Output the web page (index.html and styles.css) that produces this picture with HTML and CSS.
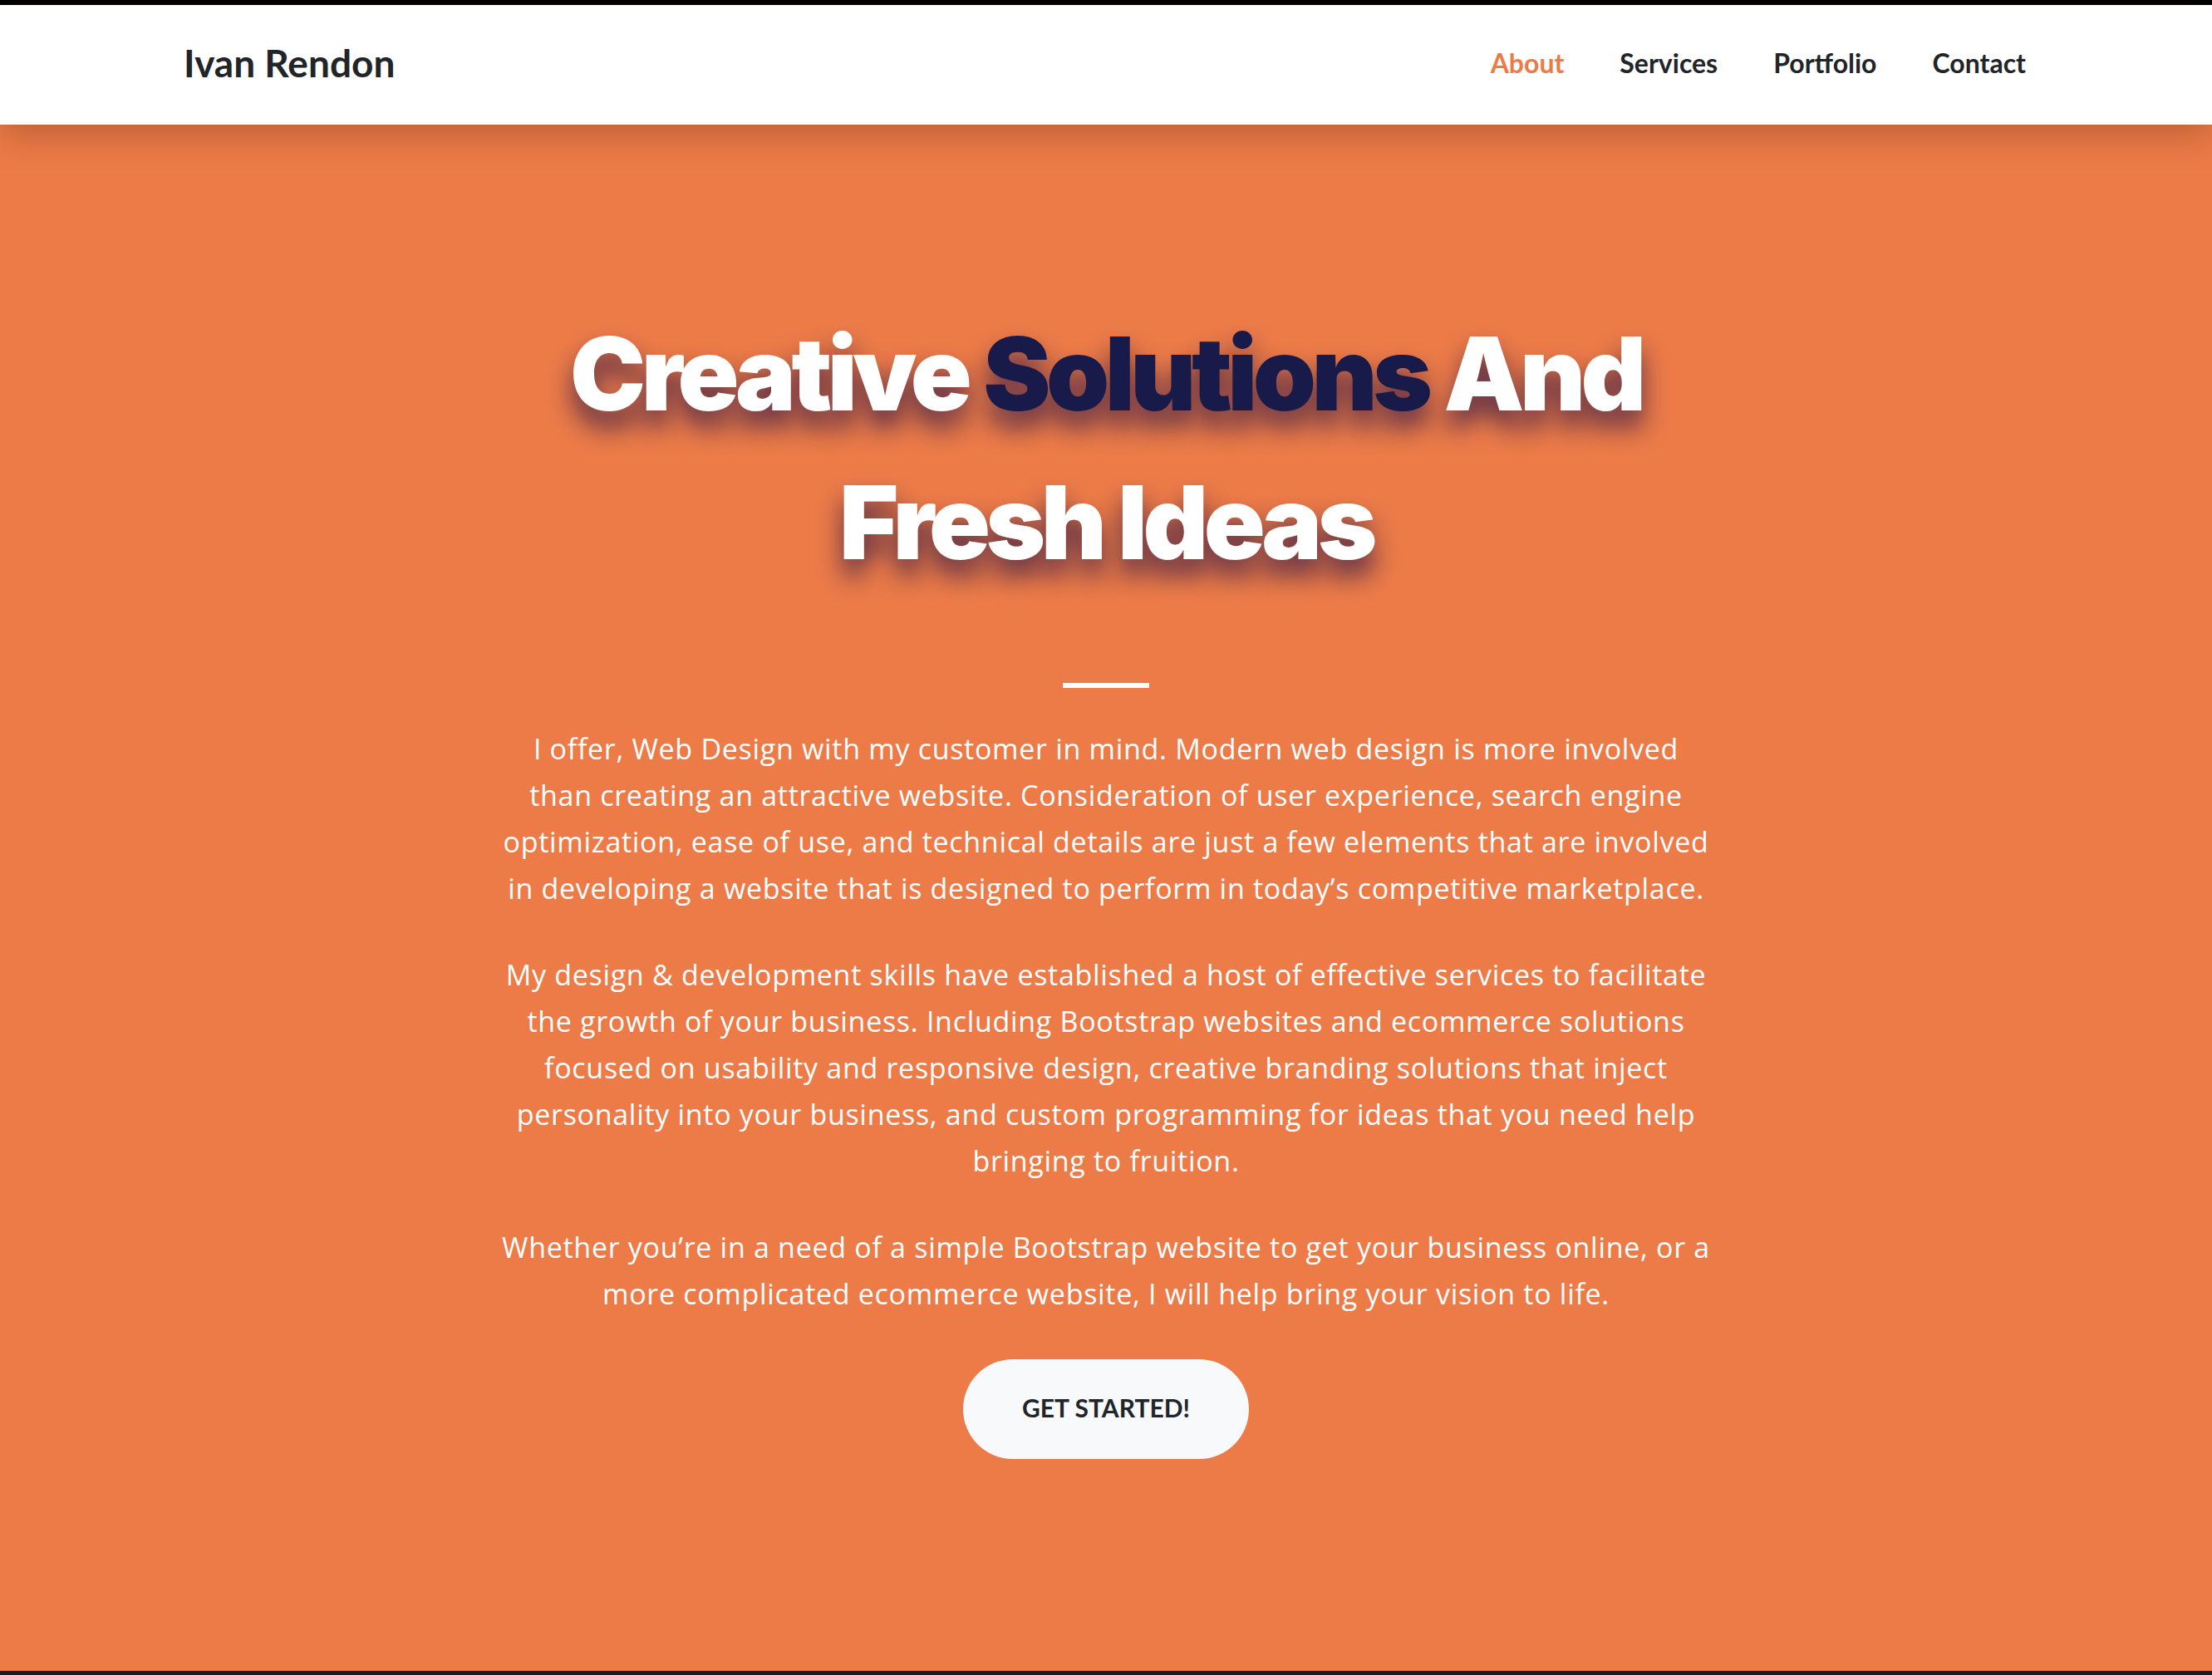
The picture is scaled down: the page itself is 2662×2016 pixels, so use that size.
FILE: index.html
```html
<!DOCTYPE html>
<html lang="en">
<head>
<meta charset="utf-8">
<title>Ivan Rendon</title>
<link rel="stylesheet" href="styles.css">
</head>
<body>
<div class="topbar"></div>
<nav class="navbar">
  <div class="nav-inner">
    <a class="brand" href="#">Ivan Rendon</a>
    <ul class="nav-links">
      <li><a class="nav-link active" href="#">About</a></li>
      <li><a class="nav-link" href="#">Services</a></li>
      <li><a class="nav-link" href="#">Portfolio</a></li>
      <li><a class="nav-link" href="#">Contact</a></li>
    </ul>
  </div>
</nav>
<header class="hero">
  <div class="hero-inner">
    <h1 class="hero-title">Creative <span class="accent">Solutions</span> And<br>Fresh Ideas</h1>
    <hr class="divider">
    <p class="hero-text">I offer, Web Design with my customer in mind. Modern web design is more involved<br>than creating an attractive website. Consideration of user experience, search engine<br>optimization, ease of use, and technical details are just a few elements that are involved<br>in developing a website that is designed to perform in today’s competitive marketplace.</p>
    <p class="hero-text">My design &amp; development skills have established a host of effective services to facilitate<br>the growth of your business. Including Bootstrap websites and ecommerce solutions<br>focused on usability and responsive design, creative branding solutions that inject<br>personality into your business, and custom programming for ideas that you need help<br>bringing to fruition.</p>
    <p class="hero-text">Whether you’re in a need of a simple Bootstrap website to get your business online, or a<br>more complicated ecommerce website, I will help bring your vision to life.</p>
    <a class="btn-start" href="#">GET STARTED!</a>
  </div>
</header>
<footer class="page-foot"></footer>
</body>
</html>
```
FILE: styles.css
```css
* { box-sizing: border-box; }
html, body { margin: 0; padding: 0; }
body {
  background: #1b1c25;
  font-family: "Lato", "Open Sans", sans-serif;
}
.topbar {
  height: 6px;
  background: #000;
}
.navbar {
  position: relative;
  z-index: 2;
  background: #fff;
  height: 144px;
  box-shadow: 0 10px 40px rgba(60, 20, 0, 0.28);
}
.nav-inner {
  width: 2220px;
  margin: 0 auto;
  height: 100%;
  padding-bottom: 6px;
  display: flex;
  align-items: center;
  justify-content: space-between;
}
.brand {
  font-family: "Lato", sans-serif;
  font-weight: 700;
  font-size: 46px;
  color: #212529;
  text-decoration: none;
}
.nav-links {
  list-style: none;
  margin: 0;
  padding: 0 3px 0 0;
  display: flex;
  gap: 67px;
}
.nav-link {
  font-family: "Lato", sans-serif;
  font-weight: 700;
  font-size: 32px;
  color: #212529;
  text-decoration: none;
}
.nav-link.active { color: #ec7b48; }
.hero {
  background: #ec7b48;
  height: 1861px;
  padding-top: 210px;
}
.hero-inner {
  width: 1600px;
  margin: 0 auto;
  text-align: center;
}
.hero-title {
  margin: 0;
  font-family: "Inter", sans-serif;
  font-weight: 900;
  font-size: 122px;
  line-height: 179px;
  letter-spacing: -0.045em;
  color: #fff;
  text-shadow: 0 20px 30px rgba(40, 20, 70, 0.75);
}
.accent { color: #181a4a; }
.divider {
  width: 104px;
  height: 6px;
  margin: 104px auto 45px;
  border: 0;
  background: #fff;
}
.hero-text {
  margin: 0 0 48px;
  font-family: "Open Sans", sans-serif;
  font-weight: 500;
  font-size: 34px;
  line-height: 56px;
  letter-spacing: 0.7px;
  color: #fff;
}
.btn-start {
  display: inline-block;
  margin-top: 3px;
  padding: 42px 71px 46px;
  line-height: 32px;
  border-radius: 60px;
  background: #f8f9fa;
  color: #212529;
  font-family: "Lato", sans-serif;
  font-weight: 700;
  font-size: 30px;
  text-decoration: none;
}
.page-foot {
  height: 200px;
  background: #1b1c25;
}
```
